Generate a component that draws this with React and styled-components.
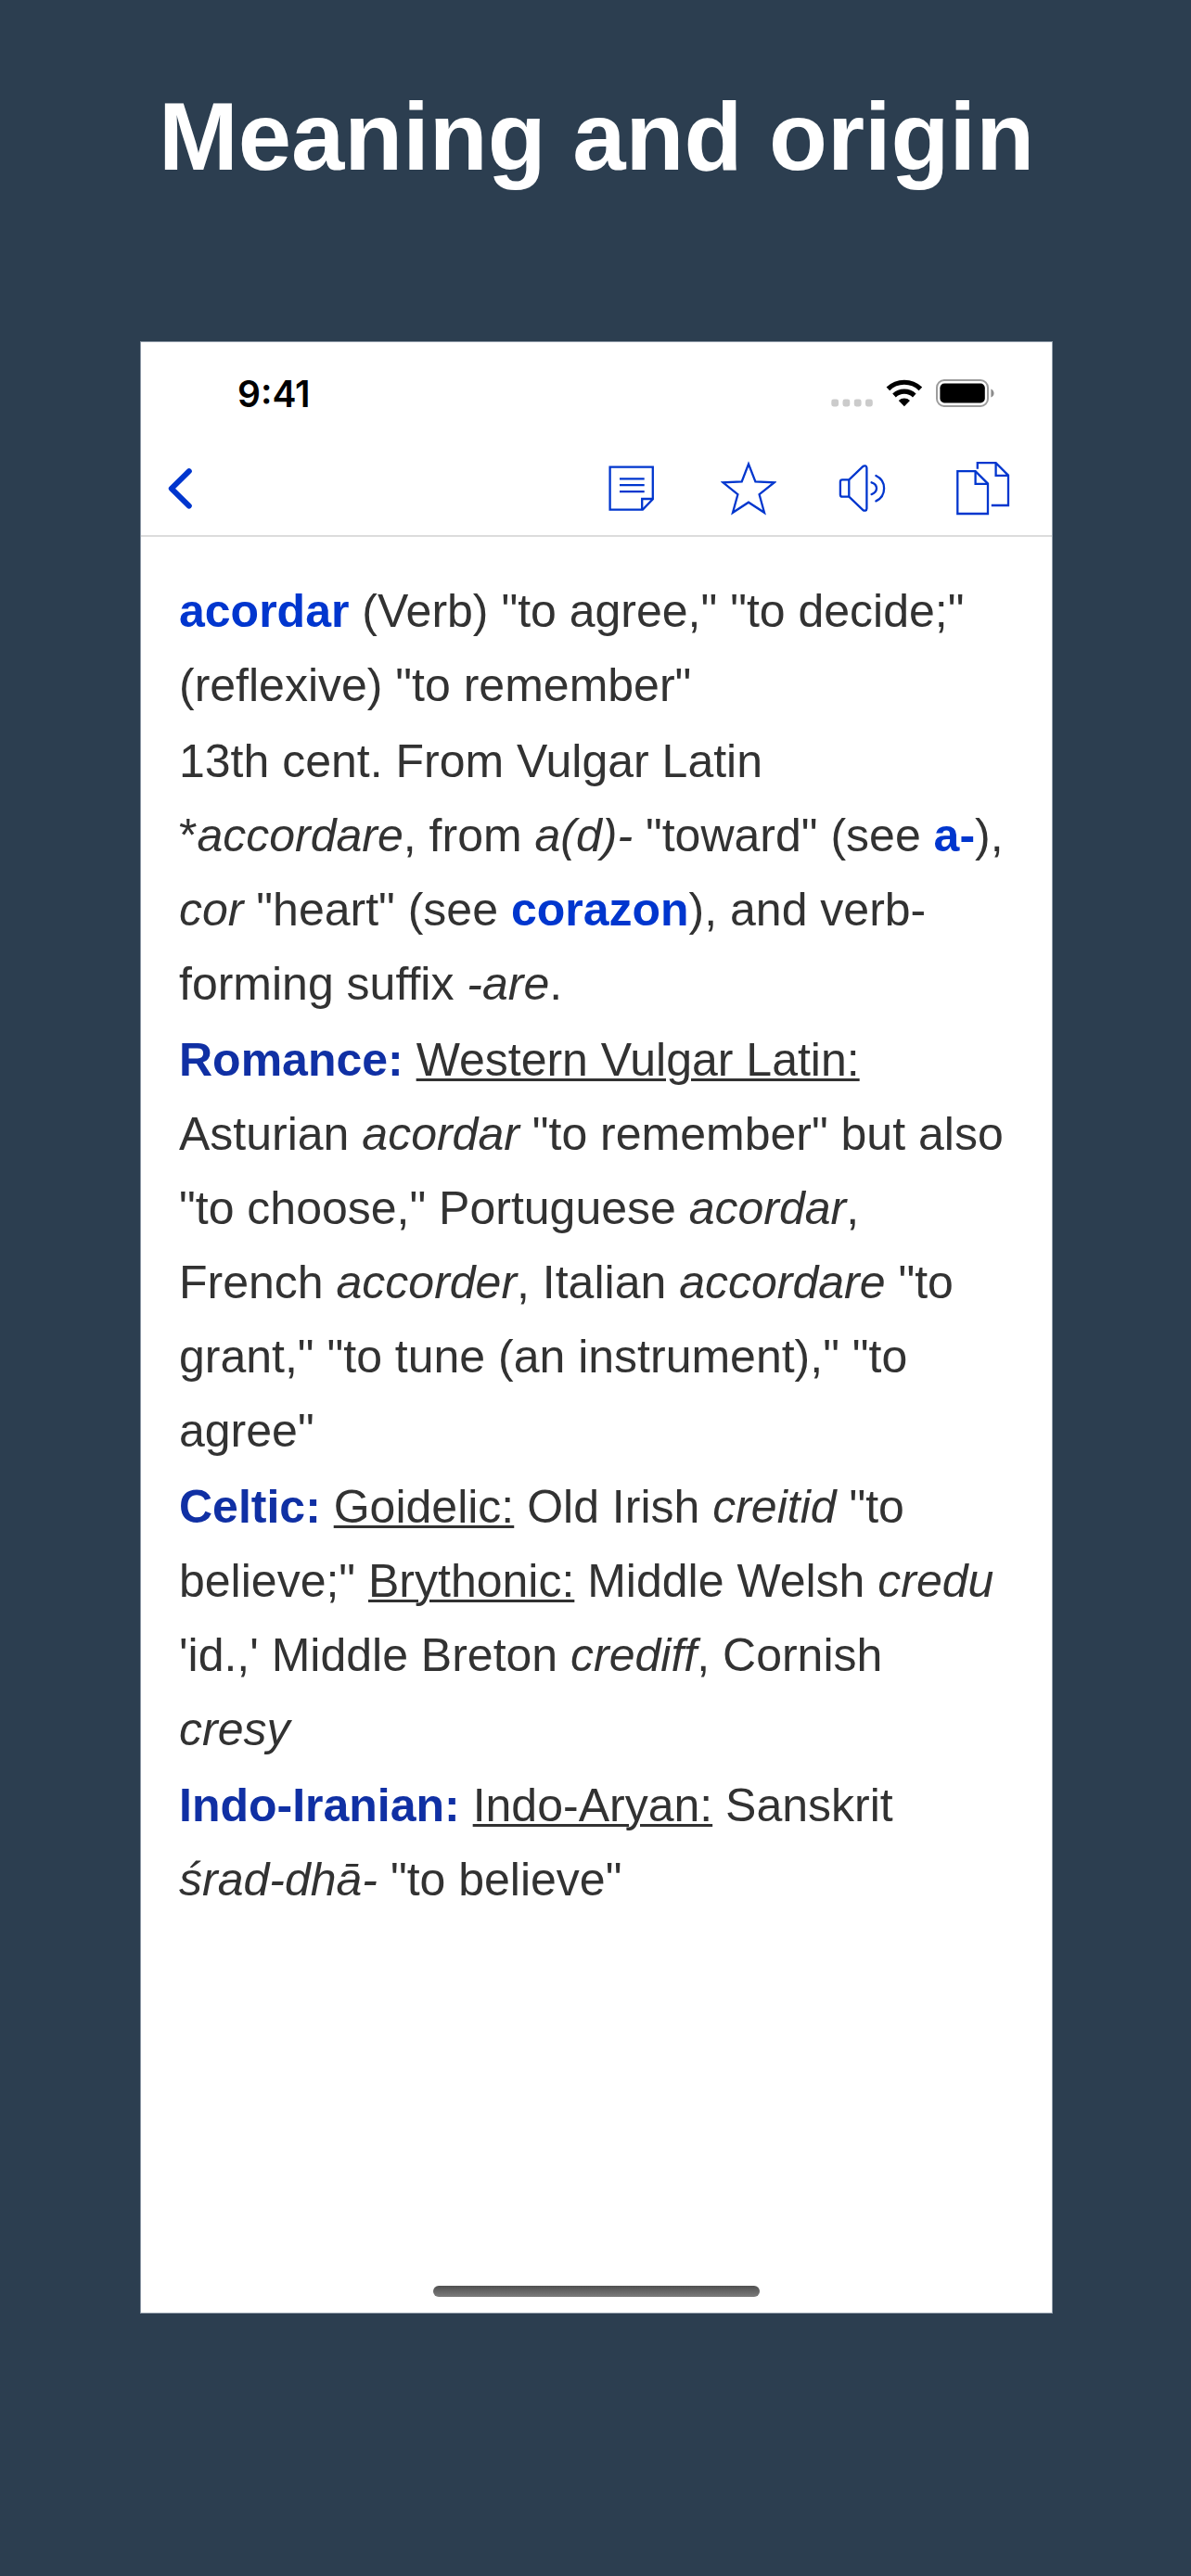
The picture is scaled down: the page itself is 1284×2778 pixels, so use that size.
import React from 'react';
import styled, { createGlobalStyle } from 'styled-components';

const PAGE_COLOR = '#2c3e50';
const LINK_COLOR = '#0036ce';
const FAMILY_COLOR = '#1030a4';
const TEXT_COLOR = '#323232';

const GlobalStyle = createGlobalStyle`
  body {
    margin: 0;
    background: ${PAGE_COLOR};
  }
`;

const Page = styled.div`
  box-sizing: border-box;
  min-height: 100vh;
  display: flex;
  flex-direction: column;
  padding: 88px 149px 283px 151px;
  background: ${PAGE_COLOR};
  font-family: 'Liberation Sans', Arial, sans-serif;
`;

const Title = styled.h1`
  margin: 0 0 160px;
  font-size: 103px;
  line-height: 120px;
  font-weight: 700;
  color: #fff;
  text-align: center;
  white-space: nowrap;
`;

const Screen = styled.main`
  flex: 1;
  display: flex;
  flex-direction: column;
  border: 1px solid #8c98a6;
  background: #fff;
`;

const StatusBar = styled.div`
  box-sizing: border-box;
  height: 108px;
  display: flex;
  align-items: center;
  justify-content: space-between;
  padding: 2px 62px 0 104px;
`;

const Time = styled.time`
  font-family: Inter, 'Liberation Sans', sans-serif;
  font-size: 39px;
  font-weight: 600;
  color: #000;
`;

const StatusIcons = styled.div`
  display: flex;
  gap: 13px;
`;

const Toolbar = styled.header`
  height: 100px;
  display: flex;
  align-items: center;
  justify-content: space-between;
  padding: 0 45px 0 12px;
  border-bottom: 2px solid #dcdcdc;
`;

const Actions = styled.div`
  display: flex;
  gap: 66px;
`;

const IconButton = styled.button`
  width: 60px;
  height: 60px;
  padding: 0;
  border: 0;
  background: none;
  color: ${LINK_COLOR};
  cursor: pointer;
`;

const Icon = styled.svg`
  display: block;
  fill: none;
  stroke: currentColor;
`;

const Entry = styled.article`
  flex: 1;
  display: flex;
  flex-direction: column;
  gap: 2px;
  padding: 40px 48px 40px 41px;
  font-size: 50px;
  line-height: 80px;
  color: ${TEXT_COLOR};
`;

const Paragraph = styled.p`
  margin: 0;
`;

const Headword = styled.b`
  color: ${LINK_COLOR};
`;

const WordLink = styled.a`
  font-weight: 700;
  color: ${LINK_COLOR};
  text-decoration: none;
`;

const Family = styled.b`
  color: ${FAMILY_COLOR};
`;

const Branch = styled.u`
  text-decoration-thickness: 3px;
  text-underline-offset: 3px;
`;

const Root = styled.i`
  white-space: nowrap;
`;

const HomeIndicator = styled.div`
  width: 352px;
  height: 12px;
  margin: 0 auto 17px;
  border-radius: 6px;
  background: linear-gradient(#505050, #7c7c7c);
`;

const SignalDots = () => (
  <svg width="46" height="30" viewBox="0 0 46 30" fill="#cbcbcb">
    <rect x="0.3" y="21.6" width="7.8" height="7.8" rx="2.4" />
    <rect x="12.5" y="21.6" width="7.8" height="7.8" rx="2.4" />
    <rect x="24.8" y="21.6" width="7.8" height="7.8" rx="2.4" />
    <rect x="37" y="21.6" width="7.8" height="7.8" rx="2.4" />
  </svg>
);

const Wifi = () => (
  <svg width="40" height="30" viewBox="0 0 40 30" fill="none" stroke="#000" strokeWidth="5.2">
    <path d="M2.4 10.3a25.2 25.2 0 0 1 35 0" />
    <path d="M9 17.5a15.8 15.8 0 0 1 21.8 0" />
    <path d="M13.8 22.9a9.3 9.3 0 0 1 12.2 0l-6.1 6.4z" fill="#000" stroke="none" />
  </svg>
);

const Battery = () => (
  <svg width="64" height="30" viewBox="0 0 64 30">
    <rect x="2" y="1" width="55" height="28" rx="8" fill="none" stroke="#9c9c9c" strokeWidth="2" />
    <rect x="5.4" y="4.6" width="48.4" height="20.8" rx="4.6" fill="#000" />
    <path d="M60.4 10.4c4.2 1.6 4.2 7.6 0 9.2z" fill="#8c8c8c" />
  </svg>
);

const BackIcon = () => (
  <Icon width="60" height="60" viewBox="0 0 60 60" strokeWidth="6" strokeLinecap="round" strokeLinejoin="round">
    <path d="M39.8 11.2L20.8 29.8l19 18.8" />
  </Icon>
);

const NoteIcon = () => (
  <Icon width="60" height="60" viewBox="0 0 60 60" strokeWidth="2.3">
    <path d="M6.6 6.6h46.2v34.8L41.9 52.6H6.6z" />
    <path d="M41.2 52.4V41h11.5M17 19.4h26.7M17 26.2h26.7M17 33.2h26.7" />
  </Icon>
);

const StarIcon = () => (
  <Icon width="60" height="60" viewBox="0 0 60 60" strokeWidth="2.3">
    <path d="M30 3.4l7.4 19 20.2 1-16 12.8 5.400 19.600L30 44.700 13 55.800l5.400-19.600L2.500 23.400l20.200-1z" />
  </Icon>
);

const SpeakerIcon = () => (
  <Icon width="60" height="60" viewBox="0 0 60 60" strokeWidth="2.3" strokeLinecap="round">
    <path d="M12.300 20.300H5.100a2.200 2.200 0 0 0-2.200 2.200v14a2.200 2.200 0 0 0 2.200 2.200h7.200zM12.300 20.300L27.200 6.200c1.700-1.600 4.200-.9 4.200 1.300v44c0 2.200-2.500 2.900-4.200 1.300L12.300 38.700" />
    <path d="M36.600 23.300c7.200 2.200 7.200 10.400 0 12.800M41.400 16c11.600 5.600 11.600 21.600 0 27.400" />
  </Icon>
);

const CopyIcon = () => (
  <Icon width="60" height="60" viewBox="0 0 60 60" strokeWidth="2.3">
    <path d="M3.300 11.200h19.300l13.400 13.400v32.400H3.300z" />
    <path d="M22.600 11.200v13.700h13.400M24.800 8.800V2.200H44.600l13.400 13.400V48H39.800M44.600 2.200v13.700H58" />
  </Icon>
);

export default function App() {
  return (
    <>
      <GlobalStyle />
      <Page>
        <Title>Meaning and origin</Title>
        <Screen>
          <StatusBar>
            <Time>9:41</Time>
            <StatusIcons>
              <SignalDots />
              <Wifi />
              <Battery />
            </StatusIcons>
          </StatusBar>
          <Toolbar>
            <IconButton aria-label="Back">
              <BackIcon />
            </IconButton>
            <Actions>
              <IconButton aria-label="Notes">
                <NoteIcon />
              </IconButton>
              <IconButton aria-label="Add to favorites">
                <StarIcon />
              </IconButton>
              <IconButton aria-label="Listen">
                <SpeakerIcon />
              </IconButton>
              <IconButton aria-label="Copy">
                <CopyIcon />
              </IconButton>
            </Actions>
          </Toolbar>
          <Entry>
            <Paragraph>
              <Headword>acordar</Headword> (Verb) "to agree," "to decide;" (reflexive) "to remember"
            </Paragraph>
            <Paragraph>
              13th cent. From Vulgar Latin *<i>accordare</i>, from <i>a(d)-</i> "toward" (see{' '}
              <WordLink href="#a">a-</WordLink>), <i>cor</i> "heart" (see <WordLink href="#corazon">corazon</WordLink>
              ), and verb-forming suffix <i>-are</i>.
            </Paragraph>
            <Paragraph>
              <Family>Romance:</Family> <Branch>Western Vulgar Latin:</Branch> Asturian <i>acordar</i> "to remember" but
              also "to choose," Portuguese <i>acordar</i>, French <i>accorder</i>, Italian <i>accordare</i> "to grant,"
              "to tune (an instrument)," "to agree"
            </Paragraph>
            <Paragraph>
              <Family>Celtic:</Family> <Branch>Goidelic:</Branch> Old Irish <i>creitid</i> "to believe;"{' '}
              <Branch>Brythonic:</Branch> Middle Welsh <i>credu</i> 'id.,' Middle Breton <i>crediff</i>, Cornish
              <br />
              <i>cresy</i>
            </Paragraph>
            <Paragraph>
              <Family>Indo-Iranian:</Family> <Branch>Indo-Aryan:</Branch> Sanskrit <Root>śrad-dhā-</Root> "to believe"
            </Paragraph>
          </Entry>
          <HomeIndicator />
        </Screen>
      </Page>
    </>
  );
}
